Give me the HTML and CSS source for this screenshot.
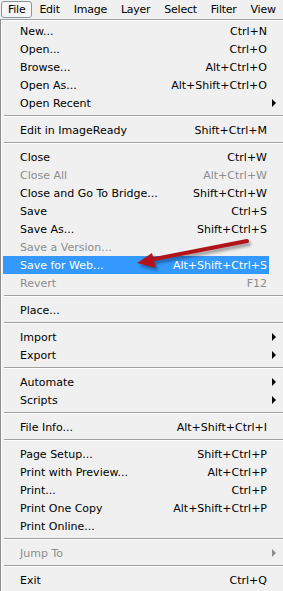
FILE: index.html
```html
<!DOCTYPE html>
<html>
<head>
<meta charset="utf-8">
<link rel="stylesheet" href="styles.css">
</head>
<body>
<div class="menubar">
  <span class="mb-item active">File</span>
  <span class="mb-item">Edit</span>
  <span class="mb-item">Image</span>
  <span class="mb-item">Layer</span>
  <span class="mb-item">Select</span>
  <span class="mb-item">Filter</span>
  <span class="mb-item">View</span>
</div>
<div class="menu">
  <div class="row"><div class="item"><span>New...</span><span>Ctrl+N</span></div><div class="sub"></div></div>
  <div class="row"><div class="item"><span>Open...</span><span>Ctrl+O</span></div><div class="sub"></div></div>
  <div class="row"><div class="item"><span>Browse...</span><span>Alt+Ctrl+O</span></div><div class="sub"></div></div>
  <div class="row"><div class="item"><span>Open As...</span><span>Alt+Shift+Ctrl+O</span></div><div class="sub"></div></div>
  <div class="row"><div class="item"><span>Open Recent</span><span></span></div><div class="sub"><i class="tri"></i></div></div>
  <div class="sep"></div>
  <div class="row"><div class="item"><span>Edit in ImageReady</span><span>Shift+Ctrl+M</span></div><div class="sub"></div></div>
  <div class="sep"></div>
  <div class="row"><div class="item"><span>Close</span><span>Ctrl+W</span></div><div class="sub"></div></div>
  <div class="row dis"><div class="item"><span>Close All</span><span>Alt+Ctrl+W</span></div><div class="sub"></div></div>
  <div class="row"><div class="item"><span>Close and Go To Bridge...</span><span>Shift+Ctrl+W</span></div><div class="sub"></div></div>
  <div class="row"><div class="item"><span>Save</span><span>Ctrl+S</span></div><div class="sub"></div></div>
  <div class="row"><div class="item"><span>Save As...</span><span>Shift+Ctrl+S</span></div><div class="sub"></div></div>
  <div class="row dis"><div class="item"><span>Save a Version...</span><span></span></div><div class="sub"></div></div>
  <div class="row hi"><div class="item"><span>Save for Web...</span><span>Alt+Shift+Ctrl+S</span></div><div class="sub"></div></div>
  <div class="row dis"><div class="item"><span>Revert</span><span>F12</span></div><div class="sub"></div></div>
  <div class="sep"></div>
  <div class="row"><div class="item"><span>Place...</span><span></span></div><div class="sub"></div></div>
  <div class="sep"></div>
  <div class="row"><div class="item"><span>Import</span><span></span></div><div class="sub"><i class="tri"></i></div></div>
  <div class="row"><div class="item"><span>Export</span><span></span></div><div class="sub"><i class="tri"></i></div></div>
  <div class="sep"></div>
  <div class="row"><div class="item"><span>Automate</span><span></span></div><div class="sub"><i class="tri"></i></div></div>
  <div class="row"><div class="item"><span>Scripts</span><span></span></div><div class="sub"><i class="tri"></i></div></div>
  <div class="sep"></div>
  <div class="row"><div class="item"><span>File Info...</span><span>Alt+Shift+Ctrl+I</span></div><div class="sub"></div></div>
  <div class="sep"></div>
  <div class="row"><div class="item"><span>Page Setup...</span><span>Shift+Ctrl+P</span></div><div class="sub"></div></div>
  <div class="row"><div class="item"><span>Print with Preview...</span><span>Alt+Ctrl+P</span></div><div class="sub"></div></div>
  <div class="row"><div class="item"><span>Print...</span><span>Ctrl+P</span></div><div class="sub"></div></div>
  <div class="row"><div class="item"><span>Print One Copy</span><span>Alt+Shift+Ctrl+P</span></div><div class="sub"></div></div>
  <div class="row"><div class="item"><span>Print Online...</span><span></span></div><div class="sub"></div></div>
  <div class="sep"></div>
  <div class="row dis"><div class="item"><span>Jump To</span><span></span></div><div class="sub"><i class="tri"></i></div></div>
  <div class="sep"></div>
  <div class="row"><div class="item"><span>Exit</span><span>Ctrl+Q</span></div><div class="sub"></div></div>
</div>
<svg class="arrow" width="283" height="591" viewBox="0 0 283 591">
  <defs>
    <filter id="sh" x="-20%" y="-50%" width="140%" height="200%">
      <feGaussianBlur stdDeviation="1.5"/>
    </filter>
  </defs>
  <g opacity="0.35" filter="url(#sh)" transform="translate(2,3)">
    <path d="M247 241 L154 259" stroke="#000" stroke-width="4" stroke-linecap="round" fill="none"/>
    <path d="M137 263 L152 253 L156 268 Z" fill="#000"/>
  </g>
  <path d="M247 241 L152 259.5" stroke="#b3141b" stroke-width="4" stroke-linecap="round" fill="none"/>
  <path d="M137 263 L152 253 L156 268 Z" fill="#b3141b"/>
</svg>
</body>
</html>
```
FILE: styles.css
```css
html, body {
  margin: 0;
  padding: 0;
  background: #f0f0f0;
}
body {
  width: 283px;
  height: 591px;
  overflow: hidden;
  position: relative;
  font-family: "DejaVu Sans", "Liberation Sans", sans-serif;
  font-size: 11px;
  color: #000;
}
.menubar {
  height: 19px;
  display: flex;
  align-items: center;
  padding-left: 1px;
  background: #f0f0f0;
  letter-spacing: -0.25px;
  white-space: nowrap;
}
.mb-item {
  padding: 0 6px;
  height: 17px;
  line-height: 15px;
  box-sizing: border-box;
  border: 1px solid transparent;
}
.mb-item.active {
  border-color: #8a949e;
  border-radius: 3px;
  background: #f6f6f6;
}
.menu {
  border-top: 1px solid #a0a0a0;
  border-left: 1px solid #8c8c8c;
  box-shadow: inset 1px 1px 0 #ffffff;
  padding: 2px 0 0 2px;
  height: 571px;
}
.row {
  display: flex;
  height: 18px;
}
.item {
  flex: 0 0 266px;
  box-sizing: border-box;
  display: flex;
  justify-content: space-between;
  align-items: center;
  padding: 0 2px 0 17px;
  white-space: nowrap;
}
.sub {
  flex: 1;
  display: flex;
  align-items: center;
  padding-left: 3px;
}
.tri {
  width: 0;
  height: 0;
  border-top: 4px solid transparent;
  border-bottom: 4px solid transparent;
  border-left: 4px solid #000;
}
.dis .item { color: #8d8d8d; }
.dis .tri { border-left-color: #8d8d8d; }
.hi .item {
  background: #3399ff;
  color: #fff;
}
.sep {
  height: 9px;
  box-sizing: border-box;
  padding-top: 3px;
  margin-left: 1px;
}
.sep::before {
  content: "";
  display: block;
  height: 1px;
  background: #a0a0a0;
  border-bottom: 1px solid #ffffff;
}
.arrow {
  position: absolute;
  left: 0;
  top: 0;
  pointer-events: none;
}
```
